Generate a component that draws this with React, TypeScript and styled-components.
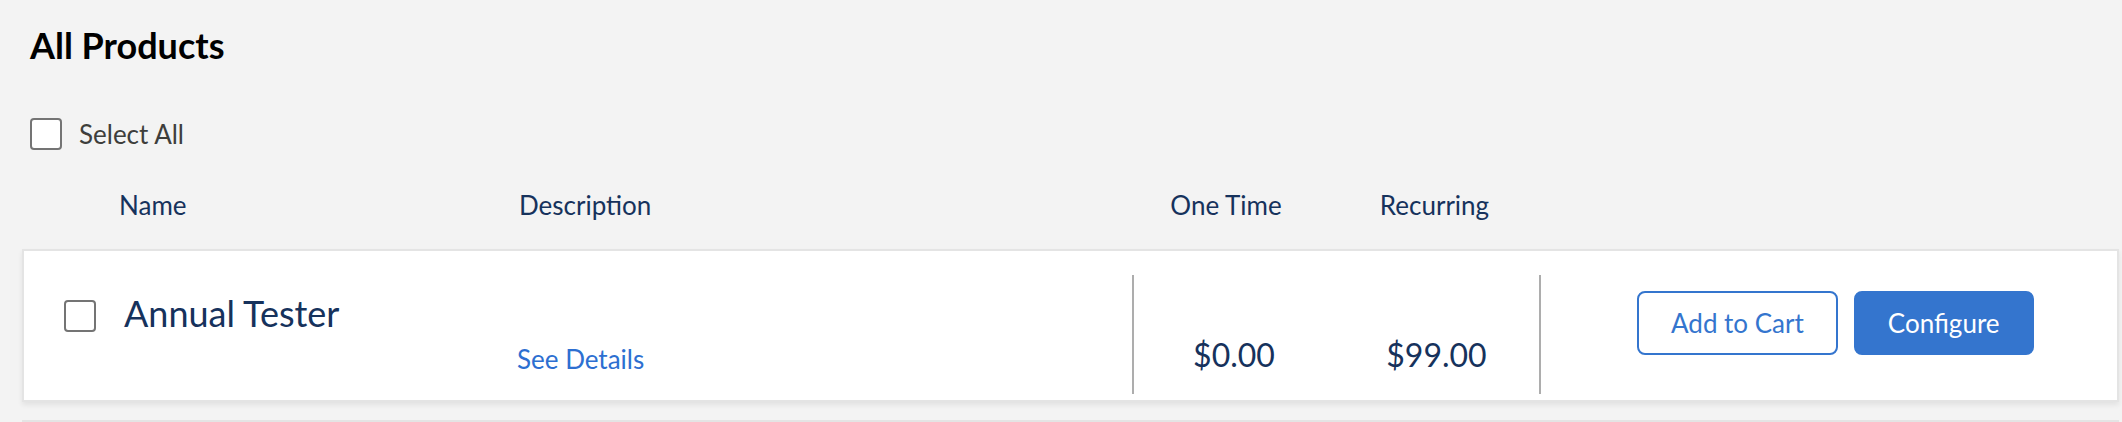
import React from "react";
import styled, { createGlobalStyle } from "styled-components";

const GlobalStyle = createGlobalStyle`
  html, body {
    margin: 0;
    padding: 0;
    background: #f3f3f3;
    overflow: hidden;
  }
  body {
    font-family: "Lato", "Noto Sans", sans-serif;
  }
  * { box-sizing: border-box; }
`;

const Page = styled.main`
  padding: 24px 3px 0 22px;
  min-height: 422px;
  background: #f3f3f3;
`;

const Title = styled.h1`
  margin: 0;
  padding-left: 8px;
  font: 700 36px/1.2 "Lato", sans-serif;
  color: #000;
`;

const SelectAllRow = styled.label`
  display: flex;
  align-items: center;
  gap: 17px;
  margin-top: 51px;
  padding-left: 8px;
  font: 400 26px/1.2 "Lato", sans-serif;
  color: #3e3e3c;
`;

const Box = styled.span<{ $offset?: number }>`
  flex: none;
  width: 32px;
  height: 32px;
  border: 2px solid #747474;
  border-radius: 4px;
  background: #fff;
  margin-top: ${(p) => p.$offset ?? 0}px;
`;

const HeaderRow = styled.div`
  display: flex;
  margin-top: 40px;
  font: 400 26px/1.2 "Lato", sans-serif;
  color: #16325c;
`;

const HeadCell = styled.div<{ $w: number; $pl?: number; $center?: boolean; $pr?: number }>`
  flex: none;
  width: ${(p) => p.$w}px;
  padding-left: ${(p) => p.$pl ?? 0}px;
  padding-right: ${(p) => p.$pr ?? 0}px;
  text-align: ${(p) => (p.$center ? "center" : "left")};
`;

const CardList = styled.div`
  display: flex;
  flex-direction: column;
  gap: 18px;
  margin-top: 28px;
`;

const Card = styled.article`
  display: flex;
  background: #fff;
  border: 2px solid #e4e4e4;
  box-shadow: 0 3px 5px rgba(0, 0, 0, 0.07);
  padding: 24px 0 6px;
  color: #16325c;
`;

const MainSection = styled.div`
  flex: none;
  width: 1108px;
  display: flex;
  padding-left: 40px;
`;

const NameCell = styled.div`
  flex: none;
  width: 453px;
  display: flex;
  align-items: center;
  gap: 28px;
  align-self: flex-start;
  padding-top: 17px;
`;

const ProductName = styled.span`
  font: 400 36px/1.2 "Lato", sans-serif;
  color: #16325c;
`;

const DescCell = styled.div`
  flex: 1;
  display: flex;
  align-items: flex-end;
  padding-bottom: 19px;
`;

const DetailsLink = styled.a`
  font: 400 26px/1.2 "Lato", sans-serif;
  color: #2d6fd1;
  text-decoration: none;
  cursor: pointer;
`;

const Divider = styled.div`
  flex: none;
  width: 2px;
  height: 119px;
  background: #adadad;
`;

const PriceSection = styled.div`
  flex: none;
  width: 405px;
  display: flex;
`;

const PriceCell = styled.div<{ $w: number }>`
  flex: none;
  width: ${(p) => p.$w}px;
  display: flex;
  align-items: flex-end;
  justify-content: center;
  padding-bottom: 20px;
  font: 400 32px/1.2 "Lato", sans-serif;
  color: #16325c;
`;

const ActionSection = styled.div`
  flex: 1;
  display: flex;
  align-items: flex-start;
  gap: 16px;
  padding: 16px 0 0 96px;
`;

const Button = styled.button<{ $primary?: boolean }>`
  height: 64px;
  padding: 0 32px;
  border: 2px solid #3475ce;
  border-radius: 8px;
  background: ${(p) => (p.$primary ? "#3475ce" : "#fff")};
  color: ${(p) => (p.$primary ? "#fff" : "#3475ce")};
  font: 400 26px/1.2 "Lato", sans-serif;
  cursor: pointer;
`;

const ListRule = styled.div`
  height: 2px;
  background: #e4e4e4;
`;

type Product = { name: string; oneTime: string; recurring: string };

const products: Product[] = [
  { name: "Annual Tester", oneTime: "$0.00", recurring: "$99.00" },
];

export default function App() {
  return (
    <>
      <GlobalStyle />
      <Page>
        <Title>All Products</Title>
        <SelectAllRow>
          <Box />
          <span>Select All</span>
        </SelectAllRow>
        <HeaderRow>
          <HeadCell $w={497} $pl={97}>Name</HeadCell>
          <HeadCell $w={615}>Description</HeadCell>
          <HeadCell $w={200} $center $pr={16}>One Time</HeadCell>
          <HeadCell $w={205} $center $pr={4}>Recurring</HeadCell>
        </HeaderRow>
        <CardList>
          {products.map((p) => (
            <Card key={p.name}>
              <MainSection>
                <NameCell>
                  <Box $offset={4} />
                  <ProductName>{p.name}</ProductName>
                </NameCell>
                <DescCell>
                  <DetailsLink>See Details</DetailsLink>
                </DescCell>
              </MainSection>
              <Divider />
              <PriceSection>
                <PriceCell $w={200}>{p.oneTime}</PriceCell>
                <PriceCell $w={205}>{p.recurring}</PriceCell>
              </PriceSection>
              <Divider />
              <ActionSection>
                <Button>Add to Cart</Button>
                <Button $primary>Configure</Button>
              </ActionSection>
            </Card>
          ))}
          <ListRule />
        </CardList>
      </Page>
    </>
  );
}
